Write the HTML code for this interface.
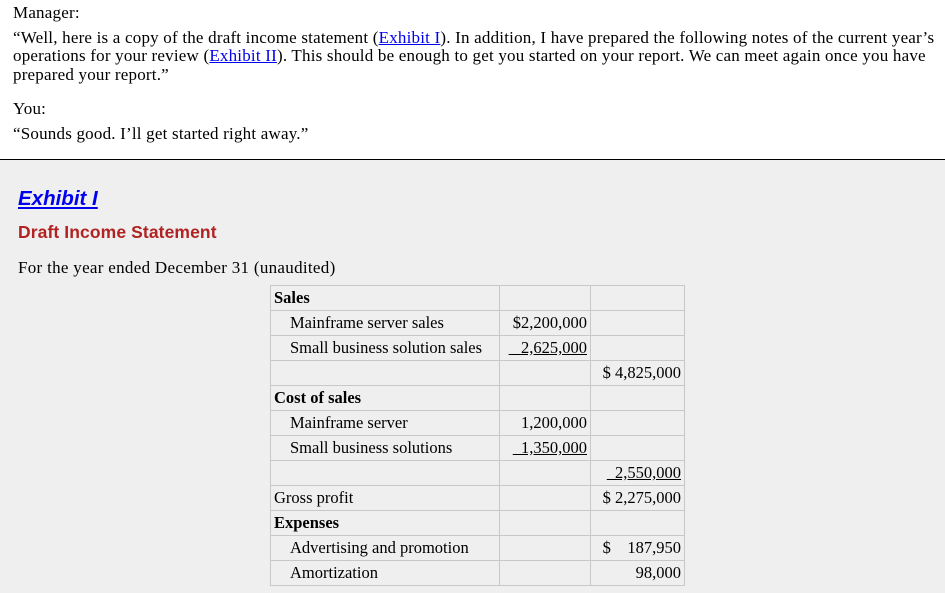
<!DOCTYPE html>
<html><head><meta charset="utf-8"><style>
body{margin:0;width:945px;height:592px;overflow:hidden;font-family:"Liberation Serif",serif;font-size:17px;color:#000;background:#fff}
.top{position:absolute;left:13px;top:-1px;white-space:nowrap;line-height:19px;letter-spacing:0.2px}
.top div{position:absolute;left:0}
a{color:#00e;text-decoration:underline}
.grey{position:absolute;left:0;top:159px;width:945px;height:433px;background:#efefef;border-top:1px solid #000}
.ex{position:absolute;left:18px;top:187px;font:italic bold 20.5px "Liberation Sans",sans-serif;color:#00e;text-decoration:underline}
.dis{position:absolute;left:18px;top:222px;font:bold 17.5px "Liberation Sans",sans-serif;color:#b22222;letter-spacing:0.1px}
.fy{position:absolute;left:18px;top:258px;letter-spacing:0.3px}
table{position:absolute;left:270px;top:285px;border-collapse:collapse}
td{border:1px solid #c8c8c8;height:24px;padding:0 3px;white-space:nowrap;line-height:24px;font-size:16.5px}
td.i{padding-left:19px}
td.n{text-align:right}
.c1{width:222px}.c2{width:84px}.c3{width:87px}
u{text-decoration:underline}
</style></head><body>
<div class="top">
<div style="top:4px">Manager:</div>
<div style="top:29px">“Well, here is a copy of the draft income statement (<a>Exhibit I</a>). In addition, I have prepared the following notes of the current year’s</div>
<div style="top:47px">operations for your review (<a>Exhibit II</a>). This should be enough to get you started on your report. We can meet again once you have</div>
<div style="top:66px">prepared your report.”</div>
<div style="top:100px">You:</div>
<div style="top:125px">“Sounds good. I’ll get started right away.”</div>
</div>
<div class="grey"></div>
<div class="ex">Exhibit I</div>
<div class="dis">Draft Income Statement</div>
<div class="fy">For the year ended December 31 (unaudited)</div>
<table>
<tr><td class="c1"><b>Sales</b></td><td class="c2"></td><td class="c3"></td></tr>
<tr><td class="i">Mainframe server sales</td><td class="n">$2,200,000</td><td></td></tr>
<tr><td class="i">Small business solution sales</td><td class="n"><u>&nbsp;&nbsp;&nbsp;2,625,000</u></td><td></td></tr>
<tr><td></td><td></td><td class="n">$ 4,825,000</td></tr>
<tr><td><b>Cost of sales</b></td><td></td><td></td></tr>
<tr><td class="i">Mainframe server</td><td class="n">1,200,000</td><td></td></tr>
<tr><td class="i">Small business solutions</td><td class="n"><u>&nbsp;&nbsp;1,350,000</u></td><td></td></tr>
<tr><td></td><td></td><td class="n"><u>&nbsp;&nbsp;2,550,000</u></td></tr>
<tr><td>Gross profit</td><td></td><td class="n">$ 2,275,000</td></tr>
<tr><td><b>Expenses</b></td><td></td><td></td></tr>
<tr><td class="i">Advertising and promotion</td><td></td><td class="n">$&nbsp;&nbsp;&nbsp;&nbsp;187,950</td></tr>
<tr><td class="i">Amortization</td><td></td><td class="n">98,000</td></tr>
</table>
</body></html>
